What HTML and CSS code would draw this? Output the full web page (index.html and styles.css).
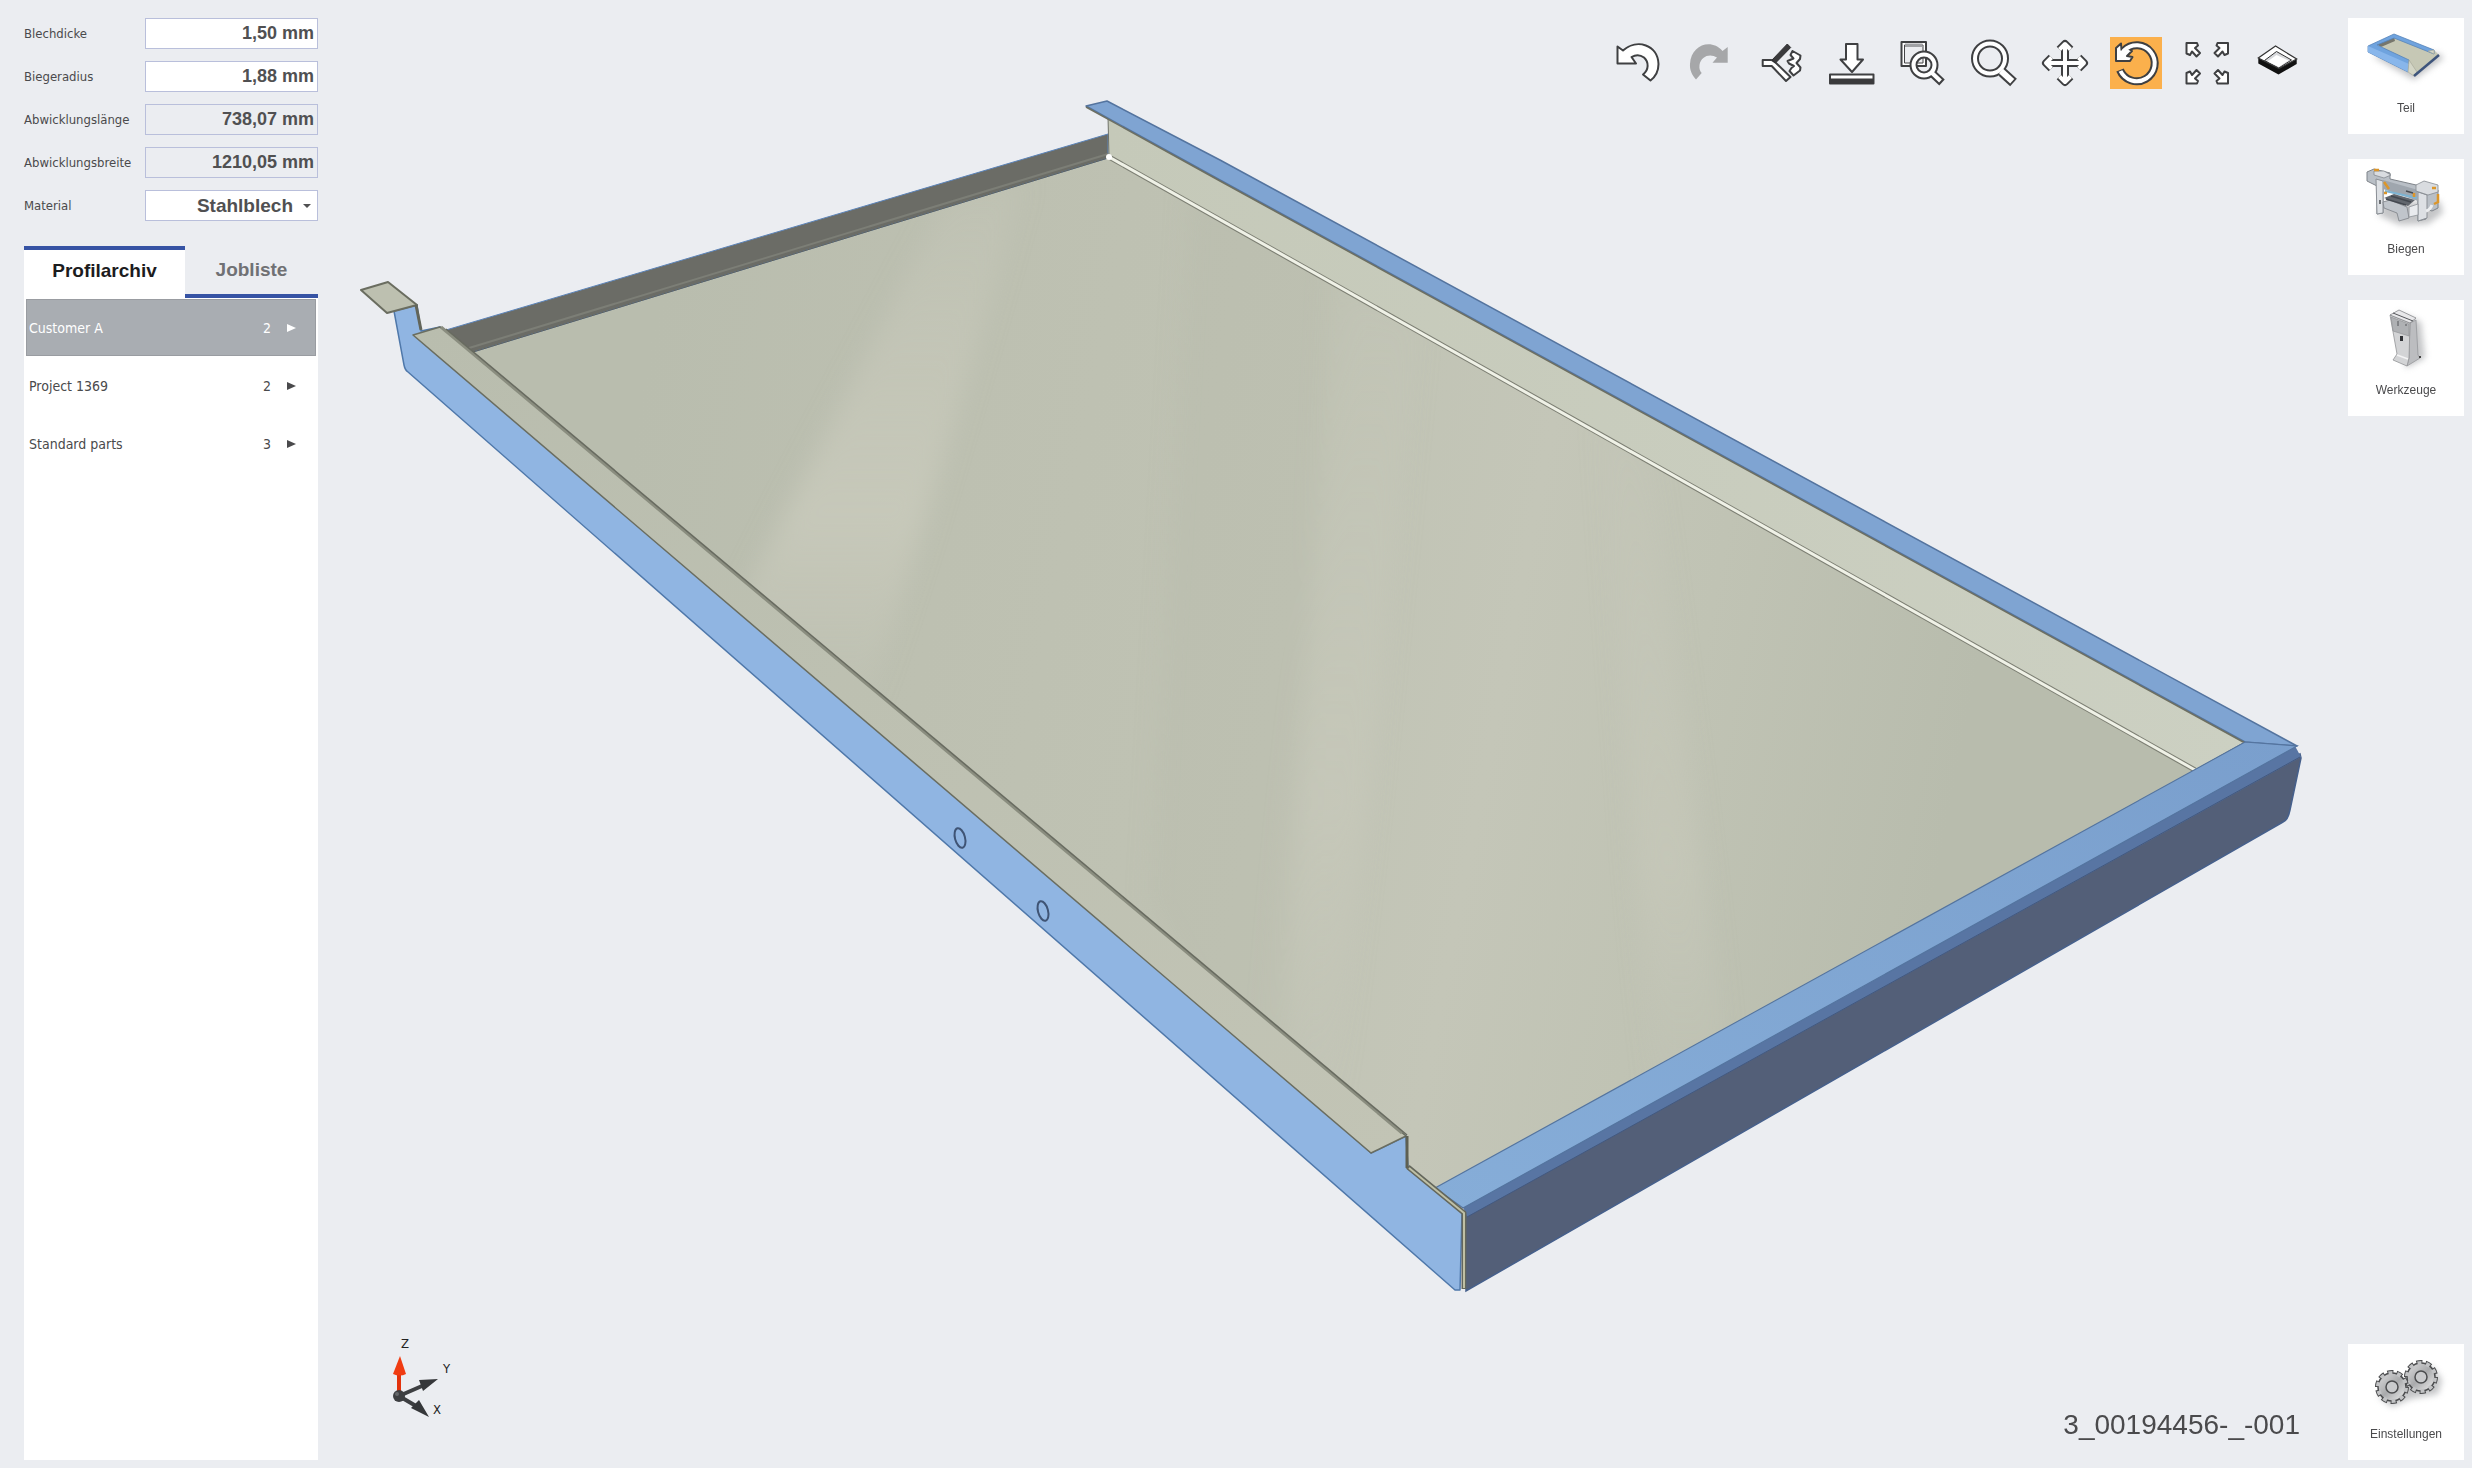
FILE: index.html
```html
<!DOCTYPE html>
<html lang="de">
<head>
<meta charset="utf-8">
<meta name="viewport" content="width=device-width, initial-scale=1">
<title>Profilarchiv</title>
<link rel="stylesheet" href="styles.css">
</head>
<body>
<div class="app">
  <aside class="sidebar">
    <form class="params">
      <label for="thickness">Blechdicke</label>
      <input id="thickness" class="field" type="text" value="1,50 mm">
      <label for="radius">Biegeradius</label>
      <input id="radius" class="field" type="text" value="1,88 mm">
      <label for="length">Abwicklungslänge</label>
      <input id="length" class="field" type="text" value="738,07 mm" readonly>
      <label for="width">Abwicklungsbreite</label>
      <input id="width" class="field" type="text" value="1210,05 mm" readonly>
      <label for="material">Material</label>
      <div class="select-wrap">
        <select id="material" class="field field-select"><option>Stahlblech</option></select>
        <svg class="caret" viewBox="0 0 8 4" aria-hidden="true"><path d="M0 0H8L4 4Z"/></svg>
      </div>
    </form>
    <div class="tabs" role="tablist">
      <button class="tab tab-active" type="button" role="tab" aria-selected="true">Profilarchiv</button>
      <button class="tab tab-idle" type="button" role="tab" aria-selected="false">Jobliste</button>
    </div>
    <div class="archive">
      <button class="entry entry-selected" type="button"><span>Customer A</span><span class="count">2</span><svg class="chevron" viewBox="0 0 9 8"><path d="M0 0L9 4L0 8Z"/></svg></button>
      <button class="entry" type="button"><span>Project 1369</span><span class="count">2</span><svg class="chevron" viewBox="0 0 9 8"><path d="M0 0L9 4L0 8Z"/></svg></button>
      <button class="entry" type="button"><span>Standard parts</span><span class="count">3</span><svg class="chevron" viewBox="0 0 9 8"><path d="M0 0L9 4L0 8Z"/></svg></button>
    </div>
  </aside>

  <main class="stage">
    <div class="toolbar" role="toolbar">
      <button class="tool" type="button" aria-label="Rückgängig"><svg viewBox="0 0 52 52"><path class="shape" d="M4.5 9.5L10 13.5C24 1 45 8 45.5 27C45.5 34 42 40 37.500 43.500L30 37.500C36 33 36 25 31 20.500C27 17.500 22 18 18.500 20L23 26.500H4.500Z"/></svg></button>
      <button class="tool" type="button" aria-label="Wiederholen"><svg viewBox="0 0 52 52"><path fill="#a6a7a9" d="M43.700 10V25.700H28.500L33 20.500C26 16 17 19 15.500 28C15 32 16 34 17.700 36L12 42.500C8 38 5.500 33 6 27C7 8 27 1 38.500 14Z"/></svg></button>
      <button class="tool" type="button" aria-label="Biegung"><svg viewBox="0 0 52 52"><path class="shape" d="M7.700 23H16.500L21 26L35.500 40L31 44L16.700 29H7.700Z"/><path fill="#3a3a3c" stroke="#2f2f31" d="M17 23L32.300 7L35.700 10.500L20.500 26Z"/><path class="shape" d="M37.500 14L45.500 18.500L45 22L41.500 26L45.500 30.500L45 33.500L38.500 38.500L34.500 34L36.500 31L39 29L34 26.500L32.500 24L38.500 21.500L35.500 18Z"/></svg></button>
      <button class="tool" type="button" aria-label="Ablegen"><svg viewBox="0 0 52 52"><path class="shape" d="M20 7H31.500V22.500H37L26 35L14.500 22.500H20Z"/><path class="shape" d="M4 37.500H47.500V46.500H4Z"/><path fill="#3a3a3c" d="M4 41.500H47.500V47H4Z"/></svg></button>
      <button class="tool" type="button" aria-label="Bereich zoomen"><svg viewBox="0 0 52 52"><path class="shape" d="M4.500 5H29V29H4.500Z"/><path fill="#ecedf0" stroke="#444446" d="M7.500 8H26V26H7.500Z"/><path fill="#a0a1a4" d="M8 6.500H25.500V10H8Z"/><path class="rim" d="M36 37L45 45.500"/><circle class="rim" cx="27" cy="28" r="10.500"/><path class="core" d="M34 35L43.500 44"/><circle class="core" cx="27" cy="28" r="10.500"/></svg></button>
      <button class="tool" type="button" aria-label="Zoomen"><svg viewBox="0 0 52 52"><path class="rim wide" d="M34 35L45.500 45.500"/><circle class="rim" cx="22" cy="21.500" r="15"/><path class="core wide" d="M33 34L44.200 44.200"/><circle class="core" cx="22" cy="21.500" r="15"/></svg></button>
      <button class="tool" type="button" aria-label="Verschieben"><svg viewBox="0 0 52 52"><path class="rim" d="M26 8V44M8 26H44M20.500 12.500L26 7L31.500 12.500M20.500 39.500L26 45L31.500 39.500M12.500 20.500L7 26L12.500 31.500M39.500 20.500L45 26L39.500 31.500"/><path class="core" d="M26 8V44M8 26H44M20.500 12.500L26 7L31.500 12.500M20.500 39.500L26 45L31.500 39.500M12.500 20.500L7 26L12.500 31.500M39.500 20.500L45 26L39.500 31.500"/></svg></button>
      <button class="tool tool-active" type="button" aria-label="Drehen"><svg viewBox="0 0 52 52"><path class="rim" d="M10 33A18 18 0 1 0 14 13.500"/><path class="shape" d="M11 6.500L11.500 13L16 10L22 14L17 19L22.500 20L20 24H6V11Z"/><path class="core" d="M10.500 34A18 18 0 1 0 14 13.500L10 19"/></svg></button>
      <button class="tool" type="button" aria-label="Einpassen"><svg viewBox="0 0 52 52"><path class="shape" d="M5.500 6H16L17 8.500L14 11L19 16L15.500 19.500L11 14.500L9 18L5.500 16.500Z"/><path class="shape" d="M47 6H36.500L35.500 8.500L38.500 11L33.500 16L37 19.500L41.500 14.500L43.500 18L47 16.500Z"/><path class="shape" d="M19 36.500L15.500 33L11 38L9 34.500L5.500 36V46.500H16L17 44L14 41.500Z"/><path class="shape" d="M33.500 36.500L37 33L41.500 38L43.500 34.500L47 36V46.500H36.500L35.500 44L38.500 41.500Z"/></svg></button>
      <button class="tool" type="button" aria-label="Ansicht"><svg viewBox="0 0 52 52"><path fill="#111" d="M6.300 21L27 31L44.700 22V27L26.500 37.500L6.300 26.500Z"/><path fill="#fff" stroke="#333" stroke-width="1.200" d="M23.500 9L6.300 21L27 31.500L44.700 22Z"/><path fill="#d8d9dc" stroke="#333" d="M24.500 14.500L12.500 23.500L26.800 31L39.500 23Z"/><path fill="#fff" d="M24.500 18L15.500 24.500L26.800 30L36.500 23.500Z"/></svg></button>
    </div>

    <svg class="model" viewBox="318 96 2022 1224" role="img" aria-label="Blechteil">
      <defs>
        <linearGradient id="sheet" gradientUnits="userSpaceOnUse" x1="620" y1="500" x2="1960" y2="760">
          <stop offset="0" stop-color="#b9bdae"/><stop offset=".24" stop-color="#bdc0b1"/><stop offset=".5" stop-color="#c0c3b4"/><stop offset=".66" stop-color="#c4c6b8"/><stop offset=".8" stop-color="#c0c3b4"/><stop offset="1" stop-color="#b8bcad"/>
        </linearGradient>
        <linearGradient id="wall" x1="0" y1="0" x2="1" y2="0"><stop offset="0" stop-color="#c5c9b9"/><stop offset="1" stop-color="#ccd0c2"/></linearGradient>
        <linearGradient id="front" x1="0" y1="1" x2="1" y2="0"><stop offset="0" stop-color="#86add8"/><stop offset="1" stop-color="#7a9fcd"/></linearGradient>
        <linearGradient id="lip" x1="0" y1="0" x2="1" y2="1"><stop offset="0" stop-color="#b9bdae"/><stop offset="1" stop-color="#c2c4b5"/></linearGradient>
        <linearGradient id="fade" x1="0" y1="0" x2="0" y2="1"><stop offset="0" stop-color="#cbccbe" stop-opacity=".2"/><stop offset=".6" stop-color="#cbccbe" stop-opacity=".7"/><stop offset="1" stop-color="#cbccbe" stop-opacity="0"/></linearGradient>
        <filter id="soft" x="-30%" y="-10%" width="160%" height="120%"><feGaussianBlur stdDeviation="12"/></filter>
        <clipPath id="floor"><path d="M473 352L1109 158L2195 770L1435 1188L1408 1166L1406 1136Z"/></clipPath>
      </defs>
      <path fill="url(#sheet)" d="M446 330L473 350L1109 157L2200 770L1435 1190L1408 1168L1406 1136Z"/>
      <g clip-path="url(#floor)">
        <g filter="url(#soft)">
          <path fill="url(#fade)" d="M950 190L1025 180L860 740L730 620Z"/>
          <path fill="url(#fade)" opacity=".6" d="M1345 290L1420 320L1330 1150L1260 1100Z"/>
          <path fill="#b3b8a8" opacity=".25" d="M1190 190L1330 250L1280 1150L1150 900Z"/>
          <path fill="url(#fade)" opacity=".6" d="M1600 420L1650 450L1735 1130L1660 1160Z"/>
        </g>
      </g>
      <path fill="#6b6c66" stroke="#5b83b8" stroke-width="1" d="M446 330L1108 134V158L473 352Z"/>
      <path fill="none" stroke="#7c7e76" stroke-width="2" d="M469 348L1108 154"/>
      <path fill="none" stroke="#60615a" stroke-width="1" d="M473 352L1108 158"/>
      <path fill="url(#wall)" stroke="#6f7268" stroke-width="1" d="M1108 117L2245 742L2195 770L1109 157Z"/>
      <path stroke="#7b7d72" stroke-width="5" d="M1109 157L2195 770"/>
      <path stroke="#eff1e6" stroke-width="3" d="M1109 157L2195 770"/>
      <circle cx="1109" cy="157" r="3" fill="#fff"/>
      <path fill="#7fa4d2" stroke="#54749f" stroke-width="1.500" stroke-linejoin="round" d="M1086 106L1107 101L1220 160L2297 746L2245 742L1220 180Z"/>
      <path fill="none" stroke="#6d6f62" stroke-width="1.500" d="M1086 107L1220 181L2245 743"/>
      <path fill="#535f78" stroke="#46608c" stroke-width="1.500" d="M1465 1215L2300 754L2301 758L2290 810Q2288 820 2283 822L1466 1291Z"/>
      <path fill="#5875a3" d="M1463 1207L2295 746L2301 757L1467 1217Z"/>
      <path fill="none" stroke="#43597f" stroke-width="1" d="M1467 1217L2300 757"/>
      <path fill="url(#front)" stroke="#54749f" stroke-width="1.200" d="M1435 1188L2245 742L2297 746L1463 1208Z"/>
      <path fill="#90b5e2" stroke="#4f78aa" stroke-width="1.500" stroke-linejoin="round" d="M394 311L417 305L421 331L440 327L1371 1153L1406 1136L1408 1167L1462 1212L1460 1290H1455L408 372Q405 370 404 365Z"/>
      <path fill="url(#lip)" stroke="#6a6d60" stroke-width="1.500" stroke-linejoin="round" d="M413 335L440 327L447 331L1406 1136L1371 1153Z"/>
      <path fill="none" stroke="#8a8d7f" stroke-width="3" d="M441 327L1402 1133"/>
      <path fill="none" stroke="#686b60" stroke-width="1.500" d="M446 329L1407 1135"/>
      <path fill="#bdc0b0" stroke="#6a6d60" stroke-width="2" stroke-linejoin="round" d="M361 290L388 282L417 305L387 313Z"/>
      <path fill="none" stroke="#62655a" stroke-width="3" d="M416 305L421 330"/>
      <path fill="none" stroke="#5e6053" stroke-width="3" d="M1407 1136V1167L1435 1189"/>
      <path fill="none" stroke="#64675c" stroke-width="5" stroke-linejoin="round" d="M1408 1167L1464 1213V1289"/>
      <path fill="none" stroke="#bfc0a5" stroke-width="2" stroke-linejoin="round" d="M1409 1168L1464 1213V1288"/>
      <g fill="none" stroke="#3f5475" stroke-width="2"><ellipse cx="960" cy="838" rx="5" ry="10" transform="rotate(-15 960 838)"/><ellipse cx="1043" cy="911" rx="5" ry="10" transform="rotate(-15 1043 911)"/></g>
    </svg>

    <footer class="status">
      <svg class="axes" viewBox="0 0 110 110" role="img" aria-label="Achsen">
        <path stroke="#e3320c" stroke-width="4" d="M29 74V50"/><path fill="#f03c12" d="M30 36L23 54Q30 57 36 54Z"/>
        <path stroke="#3d3f42" stroke-width="4" d="M29 76L52 66M29 76L46 86"/>
        <path fill="#35373a" d="M68 59L49 60L53 71ZM59 97L41 88L49 80Z"/>
        <circle cx="29" cy="76" r="6" fill="#3d3f42"/><circle cx="27" cy="74" r="2" fill="#66686b"/>
        <text x="31" y="28">Z</text><text x="73" y="53">Y</text><text x="63" y="94">X</text>
      </svg>
      <span class="part-number">3_00194456-_-001</span>
    </footer>
  </main>

  <nav class="modes">
    <button class="tile" type="button">
      <svg viewBox="0 0 116 80"><path class="shadow" d="M24 38L66 62L96 40L90 35Z"/><path fill="#c6c8b5" d="M30 25L46 18L86 32L91 37L66 58L58 52Z"/><path fill="#76766c" d="M28 26L46 19L47 23L33 29Z"/><path fill="#6fa3de" stroke="#5583b9" stroke-width=".8" d="M20 28L46 16L86 32V36L46 20L29 27L61 42L60 54L20 34Z"/><path fill="#88b6eb" d="M20 28L61 46L60 54L20 34Z"/><path fill="#d4d6c6" stroke="#a3a596" stroke-width=".6" d="M61 42L60 54L66 58L69 54ZM80 33L86 32V36Z"/><path stroke="#3e557c" stroke-width="2.500" d="M66 58L91 37"/></svg>
      <span>Teil</span>
    </button>
    <button class="tile" type="button">
      <svg viewBox="0 0 116 80"><path class="shadow" d="M30 56L52 66L80 65L95 54L92 42L36 44Z"/><path fill="#b9bfc6" stroke="#7f848a" d="M19 13L26 10L42 14V20L90 31V49L84 52L78 50V60L70 62V40L35 28V54L29 55V27L19 22Z"/><path fill="#dde0e4" stroke="#8b9096" d="M28 20L35 22V54L29 55ZM70 33L79 36V59L70 62Z"/><path fill="#9fa6ae" d="M35 21L70 31V42L35 30Z"/><path fill="#d9dce0" stroke="#858a90" stroke-width=".8" d="M68 26L76 22L90 26V33L80 36L68 32ZM26 12L36 12L43 16L36 19L26 16Z"/><path stroke="#7db4d3" stroke-width="2" d="M37 32L69 39"/><path fill="#62676e" d="M36 39L46 35L67 41L60 47Z"/><path fill="#c0c5cb" stroke="#7d8288" stroke-width=".8" d="M35 43L42 41L59 48L61 59L51 62L49 54L36 49Z"/><path stroke="#444950" stroke-width="1.500" d="M38 40L58 46M43 37L63 43"/><path fill="none" stroke="#eceef0" stroke-width="3" d="M78 52Q82 51 84 46"/><path fill="#e9ebee" stroke="#8d9298" stroke-width=".8" d="M61 48L70 45V56L61 58Z"/><path fill="none" stroke="#dc962a" stroke-width="2.500" d="M26 11H31M84 29H88M90 35V43L86 45M66 34V38M36 23L41 30M36 34H39"/><path stroke="#45494e" stroke-width="1.500" d="M58 32L65 34M32 41V45"/></svg>
      <span>Biegen</span>
    </button>
    <button class="tile" type="button">
      <svg viewBox="0 0 116 80"><path class="shadow" d="M50 12L73 22L77 58L58 68Z"/><path fill="#bcbdc0" stroke="#96979a" stroke-width=".8" d="M62 23L68 20L70 55L72 58L59 66L61 58Z"/><path fill="#d3d4d6" stroke="#939497" stroke-width=".8" d="M42 15L62 23L61 58L59 66L45 60L49 54Z"/><path fill="#e8e8ea" stroke="#87888b" stroke-width=".8" d="M42 15L51 10L68 18L62 23Z"/><path fill="#afb1b4" stroke="#8c8d90" stroke-width=".6" d="M43 17L61 24V36L45 31Z"/><path stroke="#55565a" d="M45 13L65 21M50 21V26M58 24V26"/><path stroke="#303236" stroke-width="3" d="M53.500 36V41"/><path fill="none" stroke="#f4f4f5" stroke-width="1.500" d="M49 55L60 59"/><path fill="#444" d="M71 56H73V58H71Z"/></svg>
      <span>Werkzeuge</span>
    </button>
    <button class="tile tile-settings" type="button">
      <svg viewBox="0 0 116 80">
        <defs><linearGradient id="metal" x1="0" y1="0" x2="1" y2="1"><stop offset="0" stop-color="#dededf"/><stop offset=".5" stop-color="#a9aaac"/><stop offset="1" stop-color="#f1f1f1"/></linearGradient></defs>
        <path class="shadow" d="M30 52L44 63L62 55L90 50L94 36L84 22Z"/>
        <g id="gear" fill="none"><circle cx="73" cy="33" r="14.500" stroke="#4b4c4e" stroke-width="5" pathLength="20" stroke-dasharray="1.300 .7"/><circle cx="73" cy="33" r="14" fill="url(#metal)" stroke="#4b4c4e" stroke-width="1.500"/><circle cx="73" cy="33" r="14" stroke="#c2c3c5" stroke-width="4" pathLength="20" stroke-dasharray=".9 1.100" stroke-dashoffset="-.2"/><circle cx="73" cy="33" r="6" fill="#c9cacc" stroke="#4b4c4e" stroke-width="1.500"/></g>
        <use href="#gear" x="-29" y="10"/>
      </svg>
      <span>Einstellungen</span>
    </button>
  </nav>
</div>
</body>
</html>
```
FILE: styles.css
```css
* { box-sizing: border-box; }

body {
  margin: 0;
  background: #ebedf1;
  color: #4a4a4c;
  font-family: "DejaVu Sans Condensed", "DejaVu Sans", sans-serif;
  font-size: 13px;
}

button {
  margin: 0;
  padding: 0;
  border: 0;
  background: none;
  color: inherit;
  font: inherit;
}

svg { display: block; }

.app {
  display: grid;
  grid-template-columns: 318px minmax(0, 1fr) 132px;
  min-height: 100vh;
}

/* Left column */
.sidebar {
  display: flex;
  flex-direction: column;
  padding: 18px 0 8px 24px;
}

.params {
  display: grid;
  grid-template-columns: 121px minmax(0, 1fr);
  gap: 12px 0;
  align-items: center;
  margin: 0 0 25px;
}

.field {
  width: 100%;
  height: 31px;
  padding: 0 3px;
  border: 1px solid #b9bfdb;
  border-radius: 0;
  background: #fff;
  color: #505052;
  font: bold 18px "Liberation Sans", Arial, sans-serif;
  text-align: right;
}

.field:read-only:not(select) { background: #ebedf1; }

.select-wrap {
  display: grid;
  align-items: center;
}

.select-wrap > * { grid-area: 1 / 1; }

.field-select {
  appearance: none;
  padding: 0 24px 0 4px;
  font-size: 19px;
  text-align-last: right;
}

.caret {
  justify-self: end;
  width: 8px;
  height: 4px;
  margin-right: 7px;
  fill: #505052;
  pointer-events: none;
}

.tabs {
  display: grid;
  grid-template-columns: 161px minmax(0, 1fr);
  height: 52px;
}

.tab {
  font: bold 19px "Liberation Sans", Arial, sans-serif;
}

.tab-active {
  padding-bottom: 6px;
  border-top: 4px solid #3653a4;
  background: #fff;
  color: #1c1c1e;
}

.tab-idle {
  border-bottom: 4px solid #3653a4;
  color: #707174;
}

.archive {
  display: flex;
  flex: 1;
  flex-direction: column;
  gap: 1px;
  padding: 1px 2px;
  background: #fff;
}

.entry {
  display: flex;
  align-items: center;
  height: 57px;
  padding: 0 20px 0 3px;
  font-size: 14px;
}

.entry-selected {
  border: 1px solid #999ca1;
  background: #a9adb2;
  color: #fff;
  padding: 0 19px 0 2px;
}

.count { margin-left: auto; }

.chevron {
  width: 9px;
  height: 8px;
  margin-left: 16px;
  fill: currentColor;
}

/* Drawing area */
.stage {
  display: flex;
  flex-direction: column;
  min-width: 0;
}

.toolbar {
  display: flex;
  justify-content: flex-end;
  gap: 19px;
  height: 96px;
  padding: 37px 36px 0 0;
}

.tool,
.tool svg {
  width: 52px;
  height: 52px;
}

.tool-active { background: #fbb04c; }

.shape {
  fill: #fff;
  stroke: #3f4042;
  stroke-width: 2;
  stroke-linejoin: round;
}

.rim,
.core {
  fill: none;
  stroke-linejoin: round;
}

.rim {
  stroke: #3f4042;
  stroke-width: 8;
}

.core {
  stroke: #fff;
  stroke-width: 4;
}

.rim.wide { stroke-width: 10; }
.core.wide { stroke-width: 6; }

.model {
  flex: 1;
  width: 100%;
  min-height: 0;
}

.status {
  display: flex;
  align-items: flex-start;
  justify-content: space-between;
  height: 148px;
  padding: 0 40px 0 52px;
}

.axes {
  width: 110px;
  height: 110px;
  fill: #222;
  font-size: 13px;
}

.part-number {
  padding-top: 89px;
  font: 28px/32px "Liberation Sans", Arial, sans-serif;
}

/* Right column */
.modes {
  display: flex;
  flex-direction: column;
  gap: 25px;
  padding: 18px 8px 8px;
}

.tile {
  display: flex;
  flex-direction: column;
  align-items: center;
  width: 116px;
  height: 116px;
  background: #fff;
  font: 12px/20px "Liberation Sans", Arial, sans-serif;
}

.tile svg {
  width: 116px;
  height: 80px;
}

.tile-settings { margin-top: auto; }

.shadow {
  fill: #8b8d91;
  opacity: 0.5;
  filter: blur(3px);
}
```
